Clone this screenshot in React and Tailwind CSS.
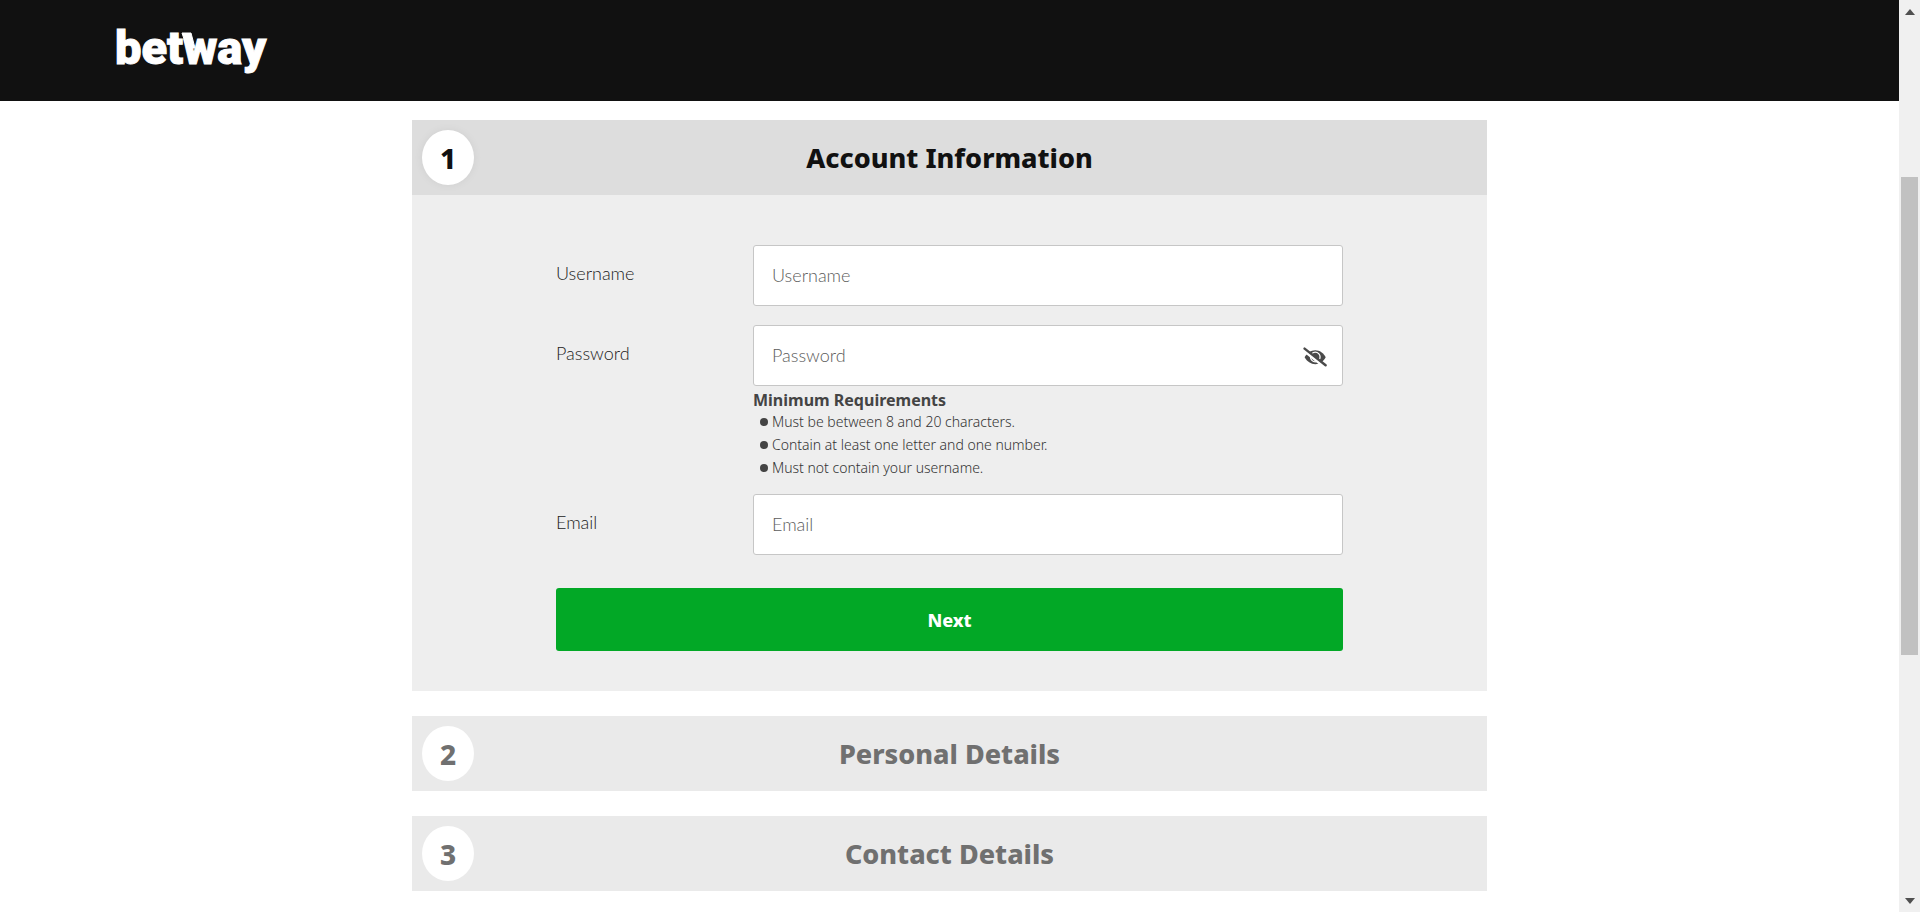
import { useState } from "react";

const inputClass =
  "h-[61px] w-full rounded-[3px] border border-[#c6c6c6] bg-white px-[18px] pb-0.5 font-['Lato',sans-serif] text-lg font-light text-[#333] outline-none placeholder:text-[#5c5c5c] focus:border-[#888]";
const labelClass = "w-[197px] shrink-0 pt-3.5 font-['Lato',sans-serif] text-lg font-light text-[#222]";

function Logo() {
  return (
    <svg viewBox="0 0 160 56" className="h-14 w-40 overflow-visible" role="img" aria-label="betway">
      <g fill="#fff" stroke="#fff" strokeWidth="1">
        <text x="-1" y="41" fontFamily="Roboto, sans-serif" fontWeight="900" fontSize="47">
          betway
        </text>
        <path d="M66 10h9l4 15h-8z" />
      </g>
    </svg>
  );
}

function EyeOffIcon() {
  return (
    <svg viewBox="0 0 24 20" className="h-5 w-6" aria-hidden="true">
      <path d="M1.6 10.3C4 6 7.800 3.200 12.300 3.200s8.300 2.800 10.400 7.100c-2.100 4.200-6 6.900-10.400 6.900S4 14.600 1.600 10.300z" fill="#4a4a4a" />
      <circle cx="12.300" cy="10" r="4.800" fill="none" stroke="#fff" strokeWidth="1.300" />
      <path d="M.6 3 21.200 19.400" stroke="#fff" strokeWidth="3.400" />
      <path d="M1.600 1.600 22.600 18.200" stroke="#4a4a4a" strokeWidth="2.400" strokeLinecap="round" />
    </svg>
  );
}

function StepHeader({ number, title, active }) {
  return (
    <header
      className={
        active
          ? "grid h-[75px] grid-cols-[1fr_auto_1fr] items-center bg-[#ddd] px-2.5 text-[#111]"
          : "grid h-[75px] grid-cols-[1fr_auto_1fr] items-center bg-[#eaeaea] px-2.5 text-[#707070]"
      }
    >
      <span
        className={
          active
            ? "flex h-[55px] w-[52px] items-center justify-center rounded-[50%] bg-white text-[28px] font-extrabold shadow-[0_0_10px_rgba(0,0,0,0.06)]"
            : "flex h-[55px] w-[52px] items-center justify-center rounded-[50%] bg-white text-[28px] font-extrabold"
        }
      >
        {number}
      </span>
      <h2 className="pt-0.5 text-[27px] font-extrabold">{title}</h2>
    </header>
  );
}

function AccountForm() {
  const [visible, setVisible] = useState(false);
  return (
    <form className="bg-[#eee] px-36 pt-[50px] pb-10" onSubmit={(e) => e.preventDefault()}>
      <div className="flex">
        <label htmlFor="username" className={labelClass}>Username</label>
        <input id="username" type="text" placeholder="Username" className={inputClass} />
      </div>
      <div className="mt-[19px] flex">
        <label htmlFor="password" className={labelClass}>Password</label>
        <div className="flex-1">
          <div className="relative">
            <input id="password" type={visible ? "text" : "password"} placeholder="Password" className={inputClass} />
            <button
              type="button"
              aria-label="Show password"
              onClick={() => setVisible(!visible)}
              className="absolute inset-y-0 right-4 flex items-center pt-0.5"
            >
              <EyeOffIcon />
            </button>
          </div>
          <p className="pt-1 text-base leading-5 font-bold text-[#444]">Minimum Requirements</p>
          <ul className="text-sm leading-[23px] font-light text-[#333]">
            {[
              "Must be between 8 and 20 characters.",
              "Contain at least one letter and one number.",
              "Must not contain your username.",
            ].map((rule) => (
              <li key={rule} className="flex items-center gap-1 pl-[7px]">
                <span className="size-2 rounded-full bg-[#444]" />
                {rule}
              </li>
            ))}
          </ul>
        </div>
      </div>
      <div className="mt-[15px] flex">
        <label htmlFor="email" className={labelClass}>Email</label>
        <input id="email" type="email" placeholder="Email" className={inputClass} />
      </div>
      <button type="submit" className="mt-[33px] h-[63px] w-full rounded-[3px] bg-[#02a826] text-lg font-extrabold text-white">
        Next
      </button>
    </form>
  );
}

function Scrollbar() {
  return (
    <div className="flex w-[21px] shrink-0 flex-col items-center bg-[#f0f0f0] py-2" aria-hidden="true">
      <svg viewBox="0 0 10 6" className="mt-px h-1.5 w-2.5 shrink-0"><path d="M5 0l5 6H0z" fill="#505050" /></svg>
      <div className="flex w-full grow flex-col items-center">
        <div className="grow-[162]" />
        <div className="w-[17px] grow-[478] bg-[#c1c1c1]" />
        <div className="grow-[243]" />
      </div>
      <svg viewBox="0 0 10 6" className="h-1.5 w-2.5 shrink-0"><path d="M5 6L0 0h10z" fill="#505050" /></svg>
    </div>
  );
}

export default function App() {
  return (
    <div className="flex h-screen bg-white font-['Noto_Sans',sans-serif]">
      <div className="min-w-0 flex-1 overflow-hidden">
        <header className="flex h-[101px] items-center bg-[#111] pl-[116px]">
          <a href="#home"><Logo /></a>
        </header>
        <main className="mx-auto mt-[19px] flex max-w-[1075px] flex-col gap-[25px]">
          <section>
            <StepHeader number="1" title="Account Information" active />
            <AccountForm />
          </section>
          <section><StepHeader number="2" title="Personal Details" /></section>
          <section><StepHeader number="3" title="Contact Details" /></section>
        </main>
      </div>
      <Scrollbar />
    </div>
  );
}
